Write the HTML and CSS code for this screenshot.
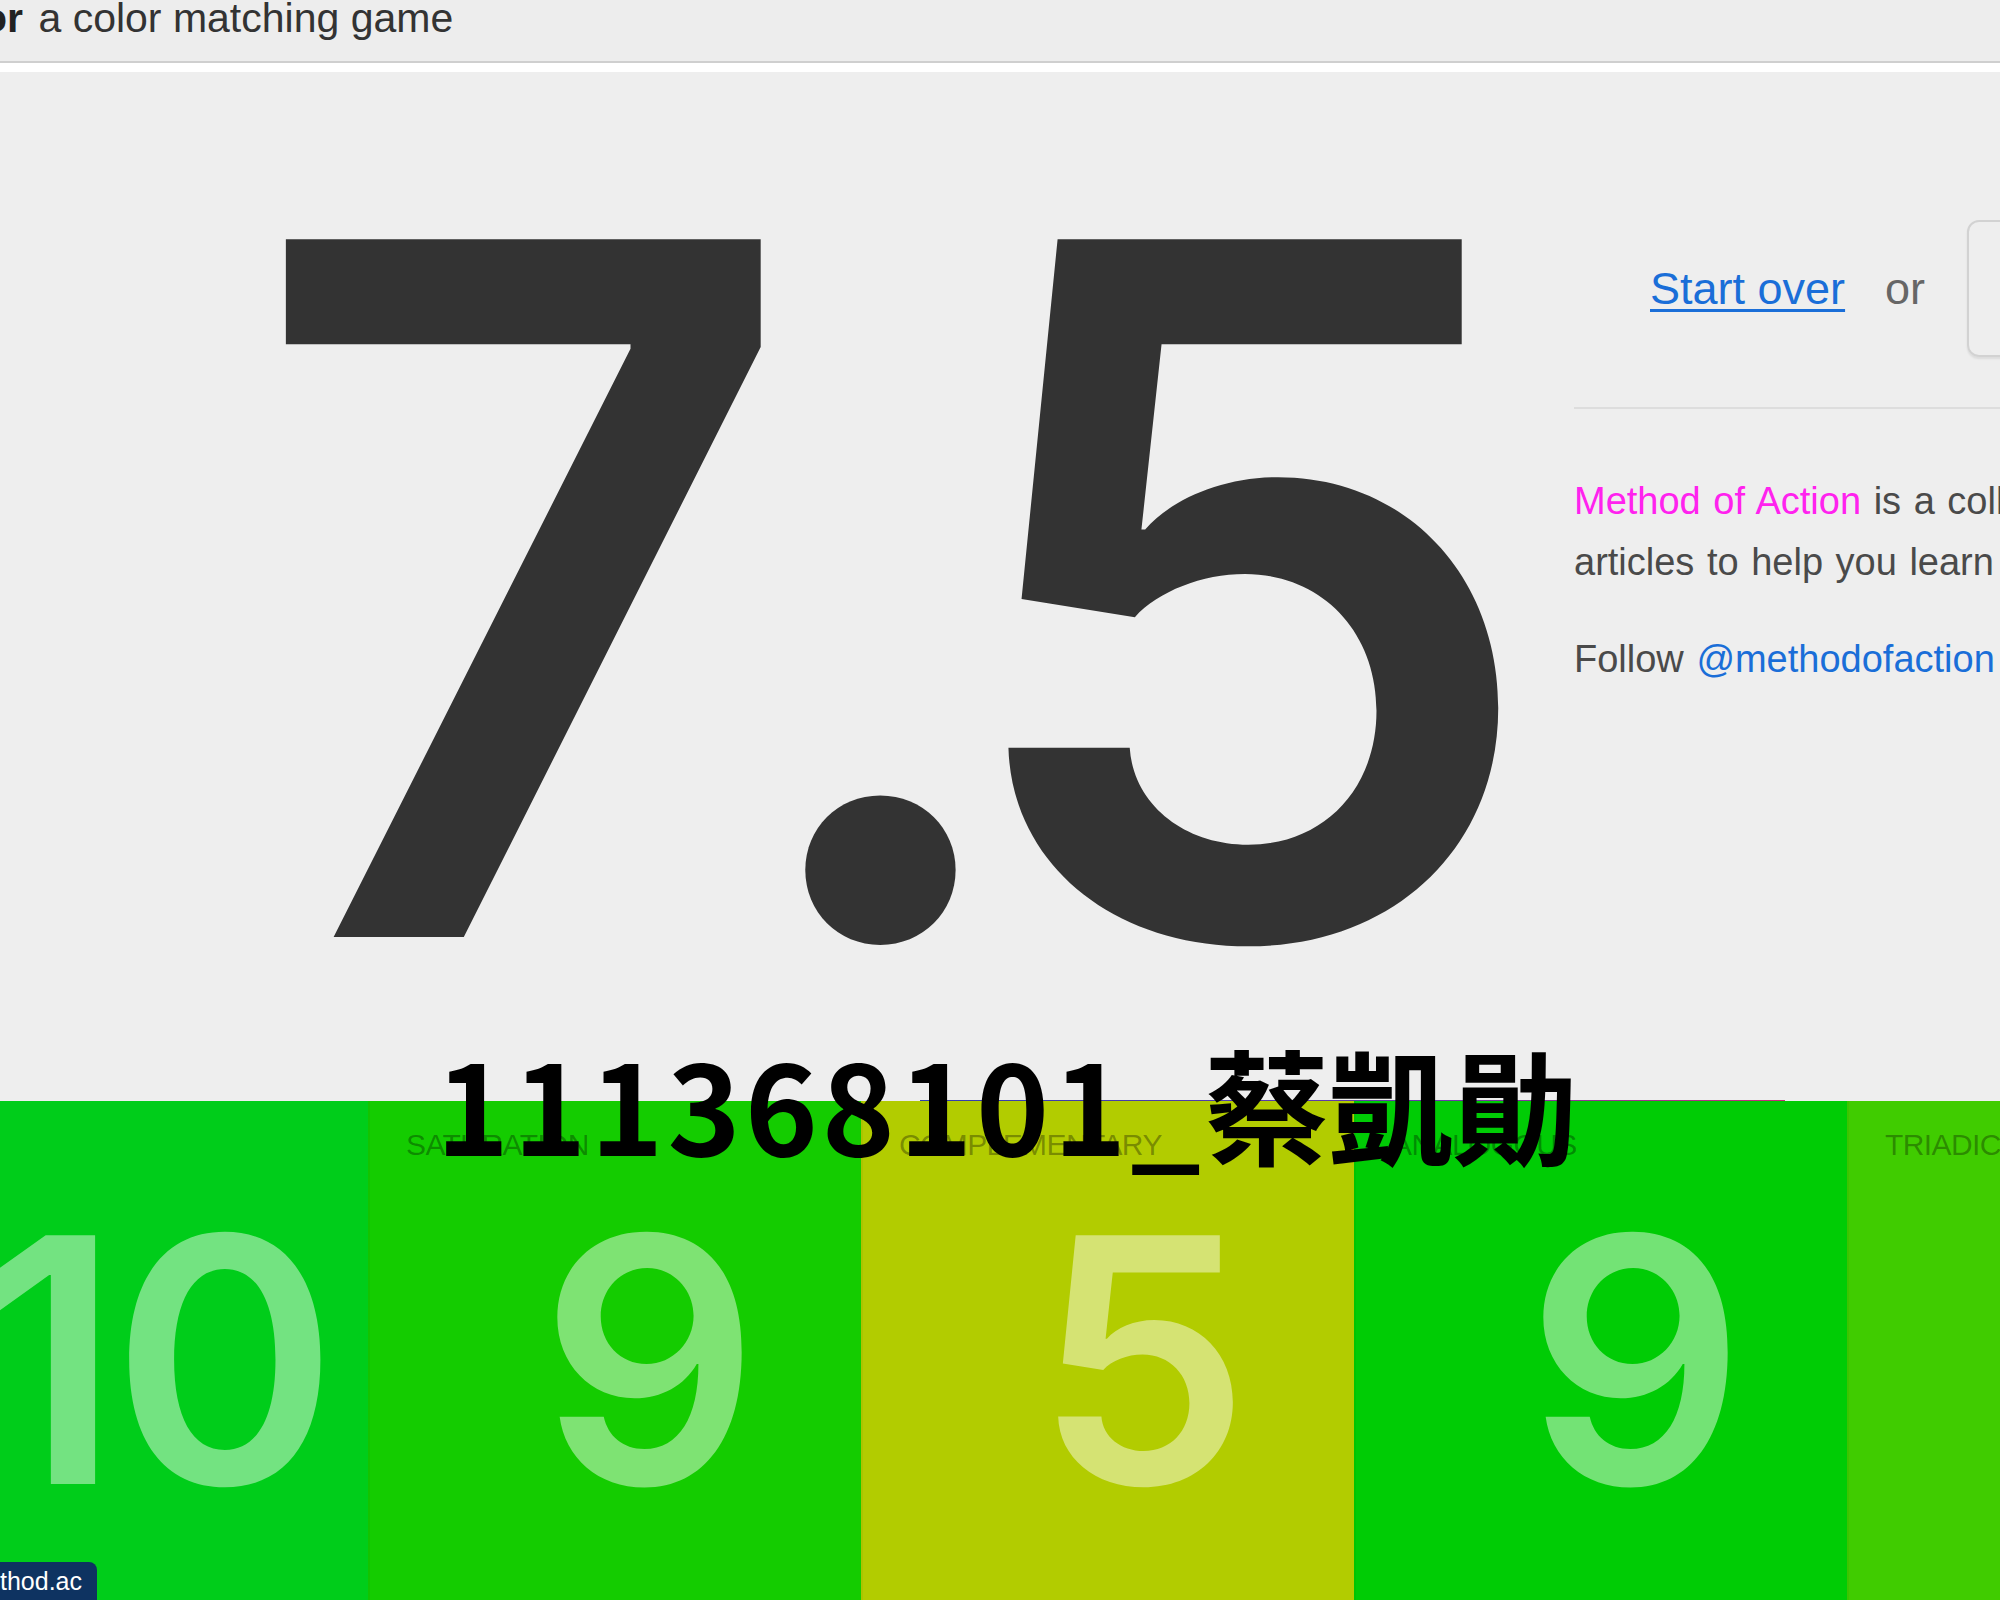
FILE: index.html
```html
<!DOCTYPE html>
<html lang="zh-Hant">
<head>
<meta charset="utf-8">
<title>Color – a color matching game</title>
<link rel="stylesheet" href="styles.css">
</head>
<body>
<header class="topbar">
  <div class="brand"><strong class="brand-name">Color</strong> a color matching game</div>
</header>
<main class="stage">
  <section class="score">
    <div class="score-value"><span class="score-int">7</span><span class="score-dot">.</span><span class="score-frac">5</span></div>
  </section>
  <aside class="side">
    <div class="actions">
      <a class="start" href="#">Start over</a>
      <span class="or">or</span>
      <div class="share"></div>
    </div>
    <hr class="rule">
    <p class="about"><span class="moa">Method of Action</span> is a collection of tools, games and articles to help you learn design.</p>
    <p class="about">Follow <a class="twitter" href="#">@methodofaction</a> on Twitter</p>
  </aside>
</main>
<section class="results">
  <div class="result r1"><div class="label">HUE</div><div class="num">10</div></div>
  <div class="result r2"><div class="label">SATURATION</div><div class="num">9</div></div>
  <div class="result r3"><div class="label">COMPLEMENTARY</div><div class="num">5</div></div>
  <div class="result r4"><div class="label">ANALOGOUS</div><div class="num">9</div></div>
  <div class="result r5"><div class="label">TRIADIC</div><div class="num">6</div></div>
</section>
<div class="progress"></div>
<div class="name"><span class="name-id">111368101_</span>蔡凱勛</div>
<div class="status"><span class="status-text">https://method.ac</span></div>
</body>
</html>
```
FILE: styles.css
```css
html, body {
  margin: 0;
  padding: 0;
}
body {
  width: 2000px;
  height: 1600px;
  overflow: hidden;
  position: relative;
  background: #eeeeee;
  font-family: "Liberation Sans", Arial, sans-serif;
  color: #333;
}

/* top bar */
.topbar {
  height: 61px;
  border-bottom: 2px solid #cfcfcf;
  background: #ededed;
  overflow: hidden;
}
.brand {
  margin-left: -84px;
  margin-top: -2px;
  font-size: 41px;
  line-height: 41px;
  color: #333;
  white-space: nowrap;
}
.brand-name {
  font-weight: bold;
  margin-right: 4px;
  color: #222;
}

/* main stage */
.stage {
  display: flex;
  height: 1029px;
  border-top: 9px solid #ffffff;
}
.score {
  flex: 0 0 1574px;
  width: 1574px;
  min-width: 0;
}
.score-value {
  margin-top: 37px;
  padding-left: 247px;
  font-family: "Inter", "Liberation Sans", sans-serif;
  font-weight: 600;
  font-size: 959px;
  line-height: 959px;
  height: 959px;
  color: #333333;
  white-space: nowrap;
}
.score-int {
  margin-right: -72px;
}
.score-dot {
  margin-right: -90px;
}

.side {
  flex: 0 0 920px;
  min-width: 0;
}
.actions {
  display: flex;
  align-items: center;
  gap: 40px;
  margin-top: 148px;
  padding-left: 76px;
  height: 137px;
}
.start {
  font-size: 45px;
  color: #1a6ed8;
  text-decoration: underline;
  text-decoration-thickness: 3px;
  text-underline-offset: 5px;
}
.or {
  font-size: 45px;
  color: #666;
}
.share {
  margin-left: 2px;
  width: 300px;
  height: 133px;
  border: 2px solid #d2d2d2;
  border-radius: 12px;
  box-shadow: 0 2px 2px rgba(0, 0, 0, 0.08);
  flex-shrink: 0;
}
.rule {
  margin: 50px 0 0 0;
  height: 2px;
  border: 0;
  background: #dddddd;
}
.about {
  margin: 0;
  width: 900px;
  font-size: 38px;
  line-height: 61px;
  word-spacing: 2px;
  color: #4a4a4a;
}
.about:first-of-type {
  margin-top: 62px;
}
.about + .about {
  margin-top: 36px;
}
.moa {
  color: #ff22ee;
}
.twitter {
  color: #1a6ed8;
  text-decoration: none;
}

/* result columns */
.results {
  display: flex;
  margin-left: -125px;
  height: 499px;
}
.result {
  flex: 0 0 493px;
  box-sizing: border-box;
  border-left: 2px solid rgba(0, 0, 0, 0.04);
}
.r1 { background: #00cd1a; }
.r2 { background: #14cc00; }
.r3 { background: #b2cc00; }
.r4 { background: #00cc05; }
.r5 { background: #40cc00; }
.label {
  margin-top: 29px;
  padding-left: 36px;
  font-size: 30px;
  line-height: 30px;
  letter-spacing: -0.6px;
  color: rgba(0, 0, 0, 0.32);
  white-space: nowrap;
}
.num {
  margin-top: 29px;
  padding-left: 60px;
  text-align: center;
  font-family: "Inter", "Liberation Sans", sans-serif;
  font-weight: 600;
  font-size: 342px;
  line-height: 342px;
  letter-spacing: -8px;
  color: rgba(255, 255, 255, 0.45);
}

/* overlays */
.progress {
  position: absolute;
  left: 920px;
  top: 1100px;
  width: 865px;
  height: 1px;
  background: linear-gradient(90deg, #2f3fb0, #6a3aa8 60%, #c82a78);
}
.name {
  position: absolute;
  left: 436px;
  top: 1040px;
  font-family: "Noto Sans CJK TC", "Noto Sans CJK SC", sans-serif;
  font-weight: 700;
  font-size: 124px;
  line-height: 124px;
  color: #000;
  white-space: nowrap;
}
.name-id {
  letter-spacing: 4px;
}
.status {
  position: absolute;
  left: 0;
  bottom: 0;
  width: 97px;
  height: 38px;
  background: #0e3361;
  border-top-right-radius: 8px;
  overflow: hidden;
  display: flex;
  justify-content: flex-end;
}
.status-text {
  padding-right: 15px;
  font-size: 25px;
  line-height: 38px;
  color: #fff;
  white-space: nowrap;
}
```
